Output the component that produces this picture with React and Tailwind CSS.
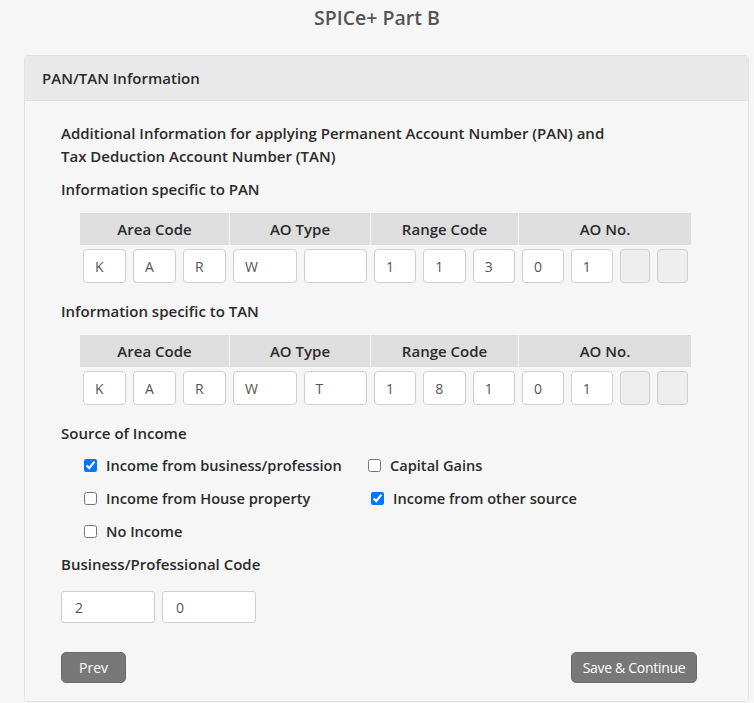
import React from "react";

const font = { fontFamily: '"Open Sans", "Liberation Sans", sans-serif' };

const pan = [
  { title: "Area Code", w: "w-[149px]", cells: ["K", "A", "R"] },
  { title: "AO Type", w: "w-[140px]", cells: ["W", ""] },
  { title: "Range Code", w: "w-[147px]", cells: ["1", "1", "3"] },
  { title: "AO No.", w: "w-[172px]", cells: ["0", "1", null, null] },
];

const tan = [
  { title: "Area Code", w: "w-[149px]", cells: ["K", "A", "R"] },
  { title: "AO Type", w: "w-[140px]", cells: ["W", "T"] },
  { title: "Range Code", w: "w-[147px]", cells: ["1", "8", "1"] },
  { title: "AO No.", w: "w-[172px]", cells: ["0", "1", null, null] },
];

function CodeTable({ cols }) {
  return (
    <div className="ml-[19px] flex gap-[1px]">
      {cols.map((c) => (
        <div key={c.title} className={`${c.w} flex flex-col gap-[4px]`}>
          <div className="flex h-[32px] items-center justify-center bg-[#dedede] text-[15px] font-semibold text-[#2b2b2b]">
            {c.title}
          </div>
          <div className="flex gap-[7px] px-[3px]">
            {c.cells.map((v, i) =>
              v === null ? (
                <div
                  key={i}
                  className="h-[34px] min-w-0 flex-1 rounded-[4px] border border-[#cfcfcf] bg-[#eeeeee]"
                />
              ) : (
                <div
                  key={i}
                  className="flex h-[34px] min-w-0 flex-1 items-center rounded-[4px] border border-[#cfcfcf] bg-white pl-[11px] text-[14px] text-[#555]"
                >
                  {v}
                </div>
              )
            )}
          </div>
        </div>
      ))}
    </div>
  );
}

const Check = ({ checked, label, className = "" }) => (
  <label className={`flex items-center ${className}`}>
    <input type="checkbox" defaultChecked={checked} className="m-0 h-[13px] w-[13px]" />
    <span className="ml-[9px] text-[14.6px] font-semibold text-[#2b2b2b]">{label}</span>
  </label>
);

export default function App() {
  return (
    <div className="min-h-[703px] bg-[#f6f6f6] pb-[2px]" style={font}>
      <div className="flex h-[36px] items-center justify-center text-[19.5px] font-semibold text-[#555]">
        SPICe+ Part B
      </div>
      <div className="ml-[24px] mr-[5px] mt-[19px] overflow-hidden rounded-[4px] border border-[#e2e2e2]">
        <div className="flex h-[45px] items-center border-b border-[#e2e2e2] bg-[#e9e9e9] pl-[17px] text-[15px] font-semibold text-[#2b2b2b]">
          PAN/TAN Information
        </div>
        <div className="bg-[#f6f6f6] pb-[18px] pl-[36px] pr-[51px] pt-[21px]">
          <p className="text-[15px] font-semibold leading-[23px] text-[#2b2b2b]">
            Additional Information for applying Permanent Account Number (PAN) and
            <br />
            Tax Deduction Account Number (TAN)
          </p>
          <p className="mt-[10px] text-[15px] font-semibold leading-[23px] text-[#2b2b2b]">
            Information specific to PAN
          </p>
          <div className="mt-[12px]">
            <CodeTable cols={pan} />
          </div>
          <p className="mt-[17px] text-[15px] font-semibold leading-[23px] text-[#2b2b2b]">
            Information specific to TAN
          </p>
          <div className="mt-[12px]">
            <CodeTable cols={tan} />
          </div>
          <p className="mt-[17px] text-[15px] font-semibold leading-[23px] text-[#2b2b2b]">
            Source of Income
          </p>
          <div className="mt-[9px] flex flex-col gap-[10px] pl-[23px]">
            <div className="flex h-[23px] items-center">
              <Check checked label="Income from business/profession" className="w-[284px]" />
              <Check label="Capital Gains" />
            </div>
            <div className="flex h-[23px] items-center">
              <Check label="Income from House property" className="w-[287px]" />
              <Check checked label="Income from other source" />
            </div>
            <div className="flex h-[23px] items-center">
              <Check label="No Income" />
            </div>
          </div>
          <p className="mt-[10px] text-[15px] font-semibold leading-[23px] text-[#2b2b2b]">
            Business/Professional Code
          </p>
          <div className="mt-[15px] flex gap-[7px]">
            {["2", "0"].map((v) => (
              <div
                key={v}
                className="flex h-[32px] w-[94px] items-center rounded-[3px] border border-[#cfcfcf] bg-white pl-[13px] text-[14px] text-[#555]"
              >
                {v}
              </div>
            ))}
          </div>
          <div className="mt-[29px] flex items-center justify-between">
            <button className="h-[31px] w-[65px] rounded-[5px] border border-[#6a6a6a] bg-[#787878] text-[14px] text-white">
              Prev
            </button>
            <button className="h-[31px] w-[126px] rounded-[5px] border border-[#6a6a6a] bg-[#787878] text-[14px] tracking-[-0.3px] text-white">
              Save &amp; Continue
            </button>
          </div>
        </div>
      </div>
    </div>
  );
}
